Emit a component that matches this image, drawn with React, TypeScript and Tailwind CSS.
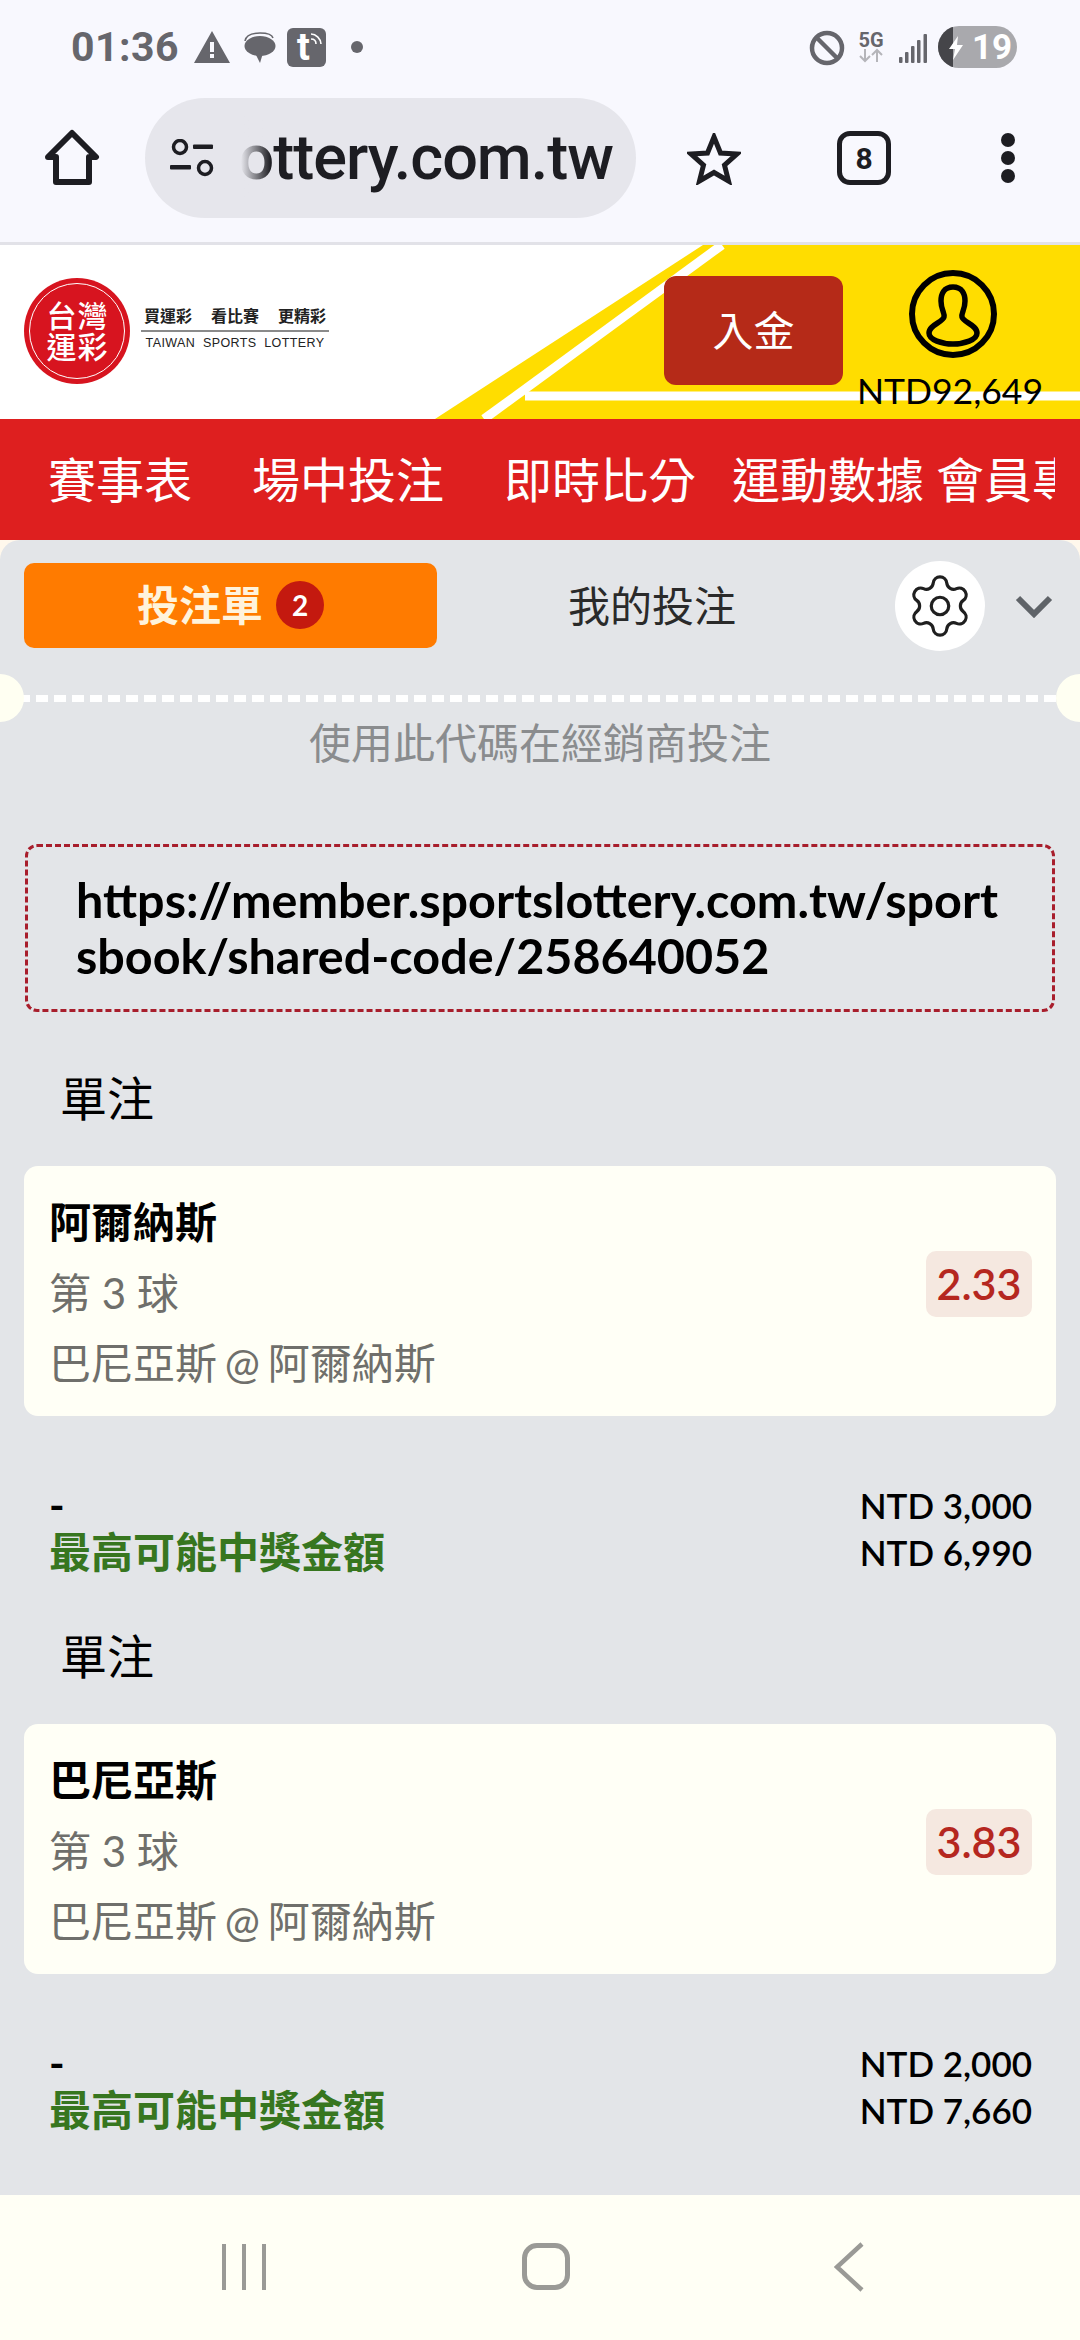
import { Settings } from 'lucide-react';

const NAV = [
  { label: '賽事表', className: 'ml-[48px]' },
  { label: '場中投注', className: 'ml-[60px]' },
  { label: '即時比分', className: 'ml-[60px]' },
  { label: '運動數據', className: 'ml-[36px]' },
  { label: '會員專區', className: 'ml-[12px]' },
];

const BETS = [
  { team: '阿爾納斯', odds: '2.33', stake: 'NTD 3,000', win: 'NTD 6,990' },
  { team: '巴尼亞斯', odds: '3.83', stake: 'NTD 2,000', win: 'NTD 7,660' },
];

function StatusBar() {
  return (
    <div className="h-[80px] pt-[16px] flex items-center text-[#66666c] font-['Roboto',sans-serif]">
      <span className="ml-[71px] w-[108px] text-[41px] font-bold leading-none tracking-[0.5px] mt-[-2px]">01:36</span>
      <svg width="36" height="32" viewBox="0 0 36 32" className="ml-[15px] mt-[-3px]">
        <path d="M18 0 L36 32 H0 Z" fill="#66666c" />
        <rect x="16" y="11" width="4" height="10" fill="#f8f8fe" />
        <rect x="16" y="23" width="4" height="4" fill="#f8f8fe" />
      </svg>
      <svg width="32" height="32" viewBox="0 0 32 32" className="ml-[14px] mt-[-1px]">
        <path d="M1 9 C2 2 10 1 16 1 C22 1 28 2 29 6" fill="none" stroke="#66666c" strokeWidth="1.5" />
        <ellipse cx="16" cy="14" rx="15.5" ry="10" fill="#66666c" />
        <path d="M11 21 L16 31 L19 21 Z" fill="#66666c" />
      </svg>
      <div className="relative ml-[11px] mt-[-1px] w-[39px] h-[39px] rounded-[6px] bg-[#66666c] flex justify-center text-white text-[38px] font-bold leading-[38px]">
        <span className="ml-[-6px]">t</span>
        <svg width="14" height="14" viewBox="0 0 14 14" className="absolute right-[3px] top-[4px]">
          <path d="M2 2 C7 2 12 7 12 12 M2 7 C5 7 7 9 7 12" fill="none" stroke="#fff" strokeWidth="1.6" />
        </svg>
      </div>
      <div className="ml-[25px] mt-[-3px] w-[12px] h-[12px] rounded-full bg-[#66666c]" />
      <svg width="36" height="36" viewBox="0 0 36 36" className="ml-[446px] mt-[-1px]">
        <circle cx="18" cy="18" r="15" fill="none" stroke="#66666c" strokeWidth="4.5" />
        <path d="M8 8 L28 28" stroke="#66666c" strokeWidth="4.5" />
      </svg>
      <div className="ml-[13px] w-[26px] flex flex-col items-center mt-[-1px]">
        <span className="text-[20px] font-bold leading-[16px]">5G</span>
        <svg width="26" height="15" viewBox="0 0 26 15">
          <path d="M7 1 V13 M2 8 L7 13 L12 8 M19 14 V2 M14 7 L19 2 L24 7" fill="none" stroke="#b5b5ba" strokeWidth="2" />
        </svg>
      </div>
      <svg width="28" height="30" viewBox="0 0 28 30" className="ml-[15px] mt-[-1px]">
        <rect x="0" y="24" width="3.5" height="6" rx="1" fill="#66666c" />
        <rect x="6" y="19" width="3.5" height="11" rx="1" fill="#66666c" />
        <rect x="12" y="13" width="3.5" height="17" rx="1" fill="#66666c" />
        <rect x="18" y="7" width="3.5" height="23" rx="1" fill="#66666c" />
        <rect x="24.5" y="1" width="3.5" height="29" rx="1" fill="#66666c" />
      </svg>
      <div className="relative ml-[11px] mt-[-2px] w-[79px] h-[42px] rounded-full overflow-hidden bg-[#a9a9ad] flex items-center text-white">
        <div className="w-[15px] h-full bg-[#454549]" />
        <svg width="14" height="24" viewBox="0 0 14 24" className="absolute left-[11px] top-[10px]">
          <path d="M9 0 L0 13 H6 L4 24 L14 9 H8 Z" fill="#fff" />
        </svg>
        <span className="ml-[19px] text-[35px] font-bold leading-none">19</span>
      </div>
    </div>
  );
}

function UrlBar() {
  return (
    <div className="h-[165px] pb-[3px] flex items-center border-b-[3px] border-[#e2e2e8]">
      <svg width="56" height="58" viewBox="0 0 56 58" className="ml-[44px] mt-[-3px]">
        <path d="M4 28 L28 4 L52 28 H45 V53 H12 V28 Z" fill="none" stroke="#1d1d22" strokeWidth="6" strokeLinejoin="round" />
      </svg>
      <div className="ml-[45px] w-[491px] h-[120px] rounded-full bg-[#e6e6ec] flex items-center relative overflow-hidden mt-[-3px]">
        <svg width="44" height="38" viewBox="0 0 44 38" className="ml-[25px] shrink-0">
          <circle cx="10" cy="8" r="6.5" fill="none" stroke="#1d1d22" strokeWidth="3.5" />
          <rect x="23" y="5.5" width="20" height="4.5" rx="1" fill="#1d1d22" />
          <rect x="0" y="26" width="21" height="4.5" rx="1" fill="#1d1d22" />
          <circle cx="35" cy="29" r="6.5" fill="none" stroke="#1d1d22" strokeWidth="3.5" />
        </svg>
        <div className="ml-[27px] w-[372px] overflow-hidden flex justify-end relative">
          <span className="text-[63px] leading-[84px] font-medium tracking-[-1px] text-[#1d1d22] whitespace-nowrap font-['Roboto',sans-serif]">sportslottery.com.tw</span>
          <div className="absolute left-0 top-0 h-full w-[30px] bg-gradient-to-r from-[#e6e6ec] to-transparent" />
        </div>
      </div>
      <svg width="54" height="52" viewBox="0 0 54 52" className="ml-[51px] mt-[-1px]">
        <path d="M27 4 L33.5 20 L50 21 L37.5 32 L41.5 48 L27 39.5 L12.5 48 L16.5 32 L4 21 L20.5 20 Z" fill="none" stroke="#1d1d22" strokeWidth="5" strokeLinejoin="miter" />
      </svg>
      <div className="ml-[96px] mt-[-3px] w-[54px] h-[54px] rounded-[13px] border-[5px] border-[#1d1d22] flex items-center justify-center text-[30px] font-bold text-[#1d1d22] font-['Roboto',sans-serif]">8</div>
      <div className="ml-[110px] mt-[-3px] flex flex-col gap-[4px]">
        <div className="w-[14px] h-[14px] rounded-full bg-[#1d1d22]" />
        <div className="w-[14px] h-[14px] rounded-full bg-[#1d1d22]" />
        <div className="w-[14px] h-[14px] rounded-full bg-[#1d1d22]" />
      </div>
    </div>
  );
}

function SiteHeader() {
  return (
    <div className="relative h-[174px] bg-white flex items-start">
      <svg width="1080" height="174" viewBox="0 0 1080 174" className="absolute left-0 top-0">
        <path d="M703 0 H1080 V174 H435 Z" fill="#ffdd00" />
        <path d="M722 0 L484 174" stroke="#fff" strokeWidth="9" />
        <path d="M525 151 H1080" stroke="#fff" strokeWidth="9" />
      </svg>
      <div className="relative ml-[24px] mt-[33px] w-[106px] h-[106px] rounded-full bg-[#d7141f] flex items-center justify-center">
        <div className="w-[96px] h-[96px] rounded-full border-[1.5px] border-white grid grid-cols-[31px_31px] place-content-center justify-items-center text-white text-[30px] leading-[31px] font-medium">
          <span>台</span><span>灣</span><span>運</span><span>彩</span>
        </div>
      </div>
      <div className="relative ml-[11px] mt-[60px] w-[188px] flex flex-col items-center">
        <div className="w-full flex justify-between px-[3px] text-[16px] leading-[22px] font-bold text-[#222]">
          <span>買運彩</span><span>看比賽</span><span>更精彩</span>
        </div>
        <div className="w-full h-[2px] bg-[#8a8a8a] mt-[3px]" />
        <span className="mt-[3px] text-[12.5px] leading-[16px] tracking-[0.4px] font-medium text-[#222] whitespace-nowrap font-['Liberation_Sans',sans-serif]">TAIWAN&nbsp; SPORTS&nbsp; LOTTERY</span>
      </div>
      <div className="relative ml-auto mt-[31px] w-[179px] h-[109px] rounded-[12px] bg-[#b52a18] flex items-center justify-center text-white text-[41px]">入金</div>
      <div className="relative ml-[15px] mr-[38px] mt-[24px] w-[184px] flex flex-col items-center">
        <svg width="90" height="90" viewBox="0 0 90 90" className="ml-[5px]">
          <circle cx="45" cy="45" r="41" fill="none" stroke="#000" strokeWidth="6" />
          <path d="M45 18 C36 18 33 25 33 32 C33 41 37 44 36 48 C35 53 21 56 21 64 C21 71 34 75 45 75 C56 75 69 71 69 64 C69 56 55 53 54 48 C53 44 57 41 57 32 C57 25 54 18 45 18 Z" fill="none" stroke="#000" strokeWidth="5.5" />
        </svg>
        <span className="mt-[14px] text-[35.5px] leading-[36px] text-black whitespace-nowrap">NTD92,649</span>
      </div>
    </div>
  );
}

function BetBlock({ team, odds, stake, win }: { team: string; odds: string; stake: string; win: string }) {
  return (
    <div className="flex flex-col">
      <div className="h-[56px] ml-[60px] text-[47px] leading-[56px] text-black">單注</div>
      <div className="mt-[40px] mx-[24px] h-[250px] rounded-[14px] bg-[#fffff6] pl-[25px] pr-[24px] pt-[21px] flex justify-between">
        <div className="flex flex-col text-[42px] leading-[70.5px] text-[#6f6f6b]">
          <span className="font-bold text-black">{team}</span>
          <span>第 3 球</span>
          <span className="[word-spacing:-3px]">巴尼亞斯 @ 阿爾納斯</span>
        </div>
        <div className="mt-[64px] w-[106px] h-[66px] rounded-[10px] bg-[#f5e8e0] flex items-center justify-center text-[43px] font-semibold text-[#b5271f]">{odds}</div>
      </div>
      <div className="mt-[66px] mx-[24px] pl-[25px] pr-[24px] flex justify-between text-[42px] leading-[47px] h-[94px]">
        <div className="flex flex-col">
          <span className="font-bold text-black">-</span>
          <span className="font-bold text-[#37761f]">最高可能中獎金額</span>
        </div>
        <div className="flex flex-col items-end text-[35px] font-semibold text-black">
          <span>{stake}</span>
          <span>{win}</span>
        </div>
      </div>
      <div className="h-[52px]" />
    </div>
  );
}

export default function App() {
  return (
    <div className="w-[1080px] h-[2340px] overflow-hidden flex flex-col bg-[#f8f8fe] font-['Lato','Noto_Sans_CJK_TC',sans-serif]">
      <StatusBar />
      <UrlBar />
      <SiteHeader />

      {/* Main nav */}
      <div className="h-[121px] shrink-0 bg-[#de1f1f] pr-[25px]">
        <div className="h-full flex items-center overflow-hidden text-white text-[48px] whitespace-nowrap">
          {NAV.map(n => (
            <span key={n.label} className={`${n.className} shrink-0`}>{n.label}</span>
          ))}
        </div>
      </div>

      {/* Bet slip panel */}
      <div className="flex-1 min-h-0 bg-[#fff8ec] overflow-hidden">
        <div className="h-full rounded-t-[20px] bg-[#e3e5e8] flex flex-col">
          <div className="mt-[21px] h-[90px] shrink-0 flex items-center pl-[24px]">
            <div className="mt-[-2px] w-[413px] h-[85px] rounded-[10px] bg-[#ff7b00] flex items-center justify-center text-[#fff3dc] text-[42px] font-bold">
              <span>投注單</span>
              <div className="ml-[13px] w-[48px] h-[48px] rounded-full bg-[#c4190f] flex items-center justify-center text-[28px] text-white">2</div>
            </div>
            <span className="ml-[131px] text-[42px] text-[#2a2a2a]">我的投注</span>
            <div className="ml-auto w-[90px] h-[90px] rounded-full bg-white flex items-center justify-center">
              <Settings size={70} strokeWidth={1.1} color="#1f1f1f" />
            </div>
            <svg width="38" height="24" viewBox="0 0 38 24" className="ml-[30px] mr-[27px] shrink-0">
              <path d="M3 4 L19 20 L35 4" fill="none" stroke="#5f6368" strokeWidth="6" />
            </svg>
          </div>

          <div className="relative mt-[44px] h-[7px] shrink-0 bg-[repeating-linear-gradient(90deg,#ffffff_0,#ffffff_12px,transparent_12px,transparent_18px)]">
            <div className="absolute left-[-24px] top-[-21px] w-[48px] h-[48px] rounded-full bg-[#fffff2]" />
            <div className="absolute right-[-24px] top-[-21px] w-[48px] h-[48px] rounded-full bg-[#fffff2]" />
          </div>

          <div className="mt-[13px] h-[56px] shrink-0 text-center text-[42px] leading-[56px] text-[#8a8c8e]">使用此代碼在經銷商投注</div>

          <div className="mt-[73px] mx-[25px] h-[168px] shrink-0 rounded-[12px] border-[3px] border-dashed border-[#a81e2c] pl-[48px] pt-[24px] text-[48.5px] leading-[56px] font-bold text-black whitespace-nowrap">
            https://member.sportslottery.com.tw/sport<br />sbook/shared-code/258640052
          </div>

          <div className="mt-[58px] flex flex-col">
            {BETS.map(b => <BetBlock key={b.team} {...b} />)}
          </div>
        </div>
      </div>

      {/* Android nav */}
      <div className="h-[145px] shrink-0 bg-[#fffff5] flex items-center">
        <div className="ml-[222px] flex gap-[16px] mt-[-2px]">
          <div className="w-[4px] h-[46px] bg-[#9a9a96]" />
          <div className="w-[4px] h-[46px] bg-[#9a9a96]" />
          <div className="w-[4px] h-[46px] bg-[#9a9a96]" />
        </div>
        <div className="ml-[256px] w-[48px] h-[47px] rounded-[15px] border-[5px] border-[#9a9a96] mt-[-2px]" />
        <svg width="30" height="50" viewBox="0 0 30 50" className="ml-[264px] mt-[-2px]">
          <path d="M28 2 L3 25 L28 48" fill="none" stroke="#9a9a96" strokeWidth="4.5" />
        </svg>
      </div>
    </div>
  );
}
